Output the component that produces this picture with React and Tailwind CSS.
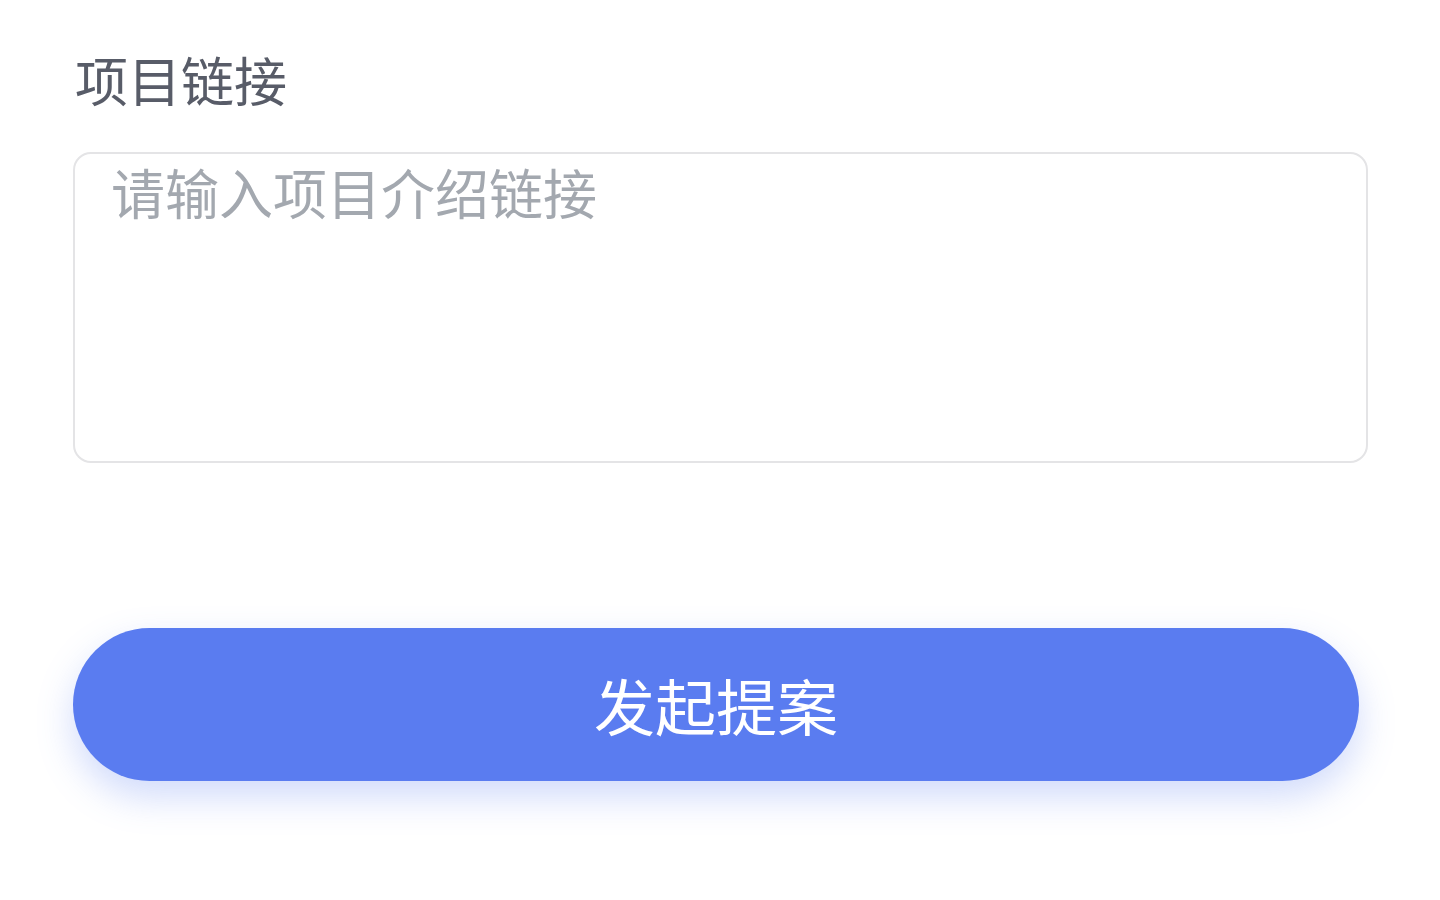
export default function App() {
  return (
    <div
      className="w-[1440px] h-[900px] bg-white overflow-hidden"
      style={{ fontFamily: '"Noto Sans CJK SC", "Noto Sans", sans-serif' }}
    >
      <div className="flex flex-col pl-[73px] pt-[51px]">
        <label className="pl-[2px] text-[53px] leading-[56px] text-[#585c68]">
          项目链接
        </label>

        <div className="mt-[45px] w-[1295px] h-[311px] rounded-[18px] border-2 border-[#e4e4e6] bg-white">
          <textarea
            className="w-full h-full resize-none bg-transparent outline-none pl-[36px] pt-[6px] text-[54px] leading-[64px] text-[#555a66] placeholder:text-[#a3a8af]"
            placeholder="请输入项目介绍链接"
          />
        </div>

        <button className="mt-[165px] w-[1286px] h-[153px] rounded-full bg-[#5a7cf0] text-white text-[61px] leading-none shadow-[0_16px_36px_rgba(90,124,240,0.28)]">
          发起提案
        </button>
      </div>
    </div>
  );
}
